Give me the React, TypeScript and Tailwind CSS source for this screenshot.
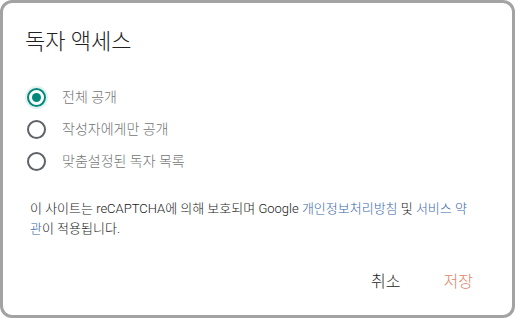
import { useState } from "react";

const options = ["전체 공개", "작성자에게만 공개", "맞춤설정된 독자 목록"];

const Radio = ({ checked }: { checked: boolean }) =>
  checked ? (
    <span className="flex h-[19px] w-[19px] items-center justify-center rounded-full border-2 border-[#00897b] shadow-[0_0_0_2px_rgba(0,137,123,0.12)]">
      <span className="h-[9px] w-[9px] rounded-full bg-[#00897b]" />
    </span>
  ) : (
    <span className="h-[19px] w-[19px] rounded-full border-2 border-[#5f6368]" />
  );

const App = () => {
  const [selected, setSelected] = useState(0);

  return (
    <div
      className="h-[318px] w-[515px] bg-white font-light"
      style={{ fontFamily: 'Roboto, "Noto Sans CJK KR", sans-serif' }}
    >
      <div className="flex h-full flex-col rounded-[12px] border-[3px] border-[#a3a3a3] bg-white pl-[22px] pr-[30px]">
        <h2 className="mt-[23px] text-[22px] leading-[32px] text-[#212121]">
          독자 액세스
        </h2>

        <div className="mt-[30px] flex flex-col gap-[13px] pl-[2px]">
          {options.map((label, i) => (
            <button
              key={label}
              onClick={() => setSelected(i)}
              className="flex h-[19px] items-center gap-[16px] text-left"
            >
              <Radio checked={selected === i} />
              <span className="text-[14px] text-[#757575]">{label}</span>
            </button>
          ))}
        </div>

        <p className="mt-[28px] w-[452px] break-all pl-[5px] text-[13px] leading-[20px] text-[#1a1a1a]">
          이 사이트는 reCAPTCHA에 의해 보호되며 Google{" "}
          <a className="text-[#3a67a8]">개인정보처리방침</a> 및{" "}
          <a className="text-[#3a67a8]">서비스 약관</a>이 적용됩니다.
        </p>

        <div className="mt-auto mb-[21px] flex items-center justify-end gap-[43px] pr-[9px]">
          <button className="text-[16px] text-[#212121]">취소</button>
          <button className="text-[16px] text-[#e0876a]">저장</button>
        </div>
      </div>
    </div>
  );
};

export default App;
